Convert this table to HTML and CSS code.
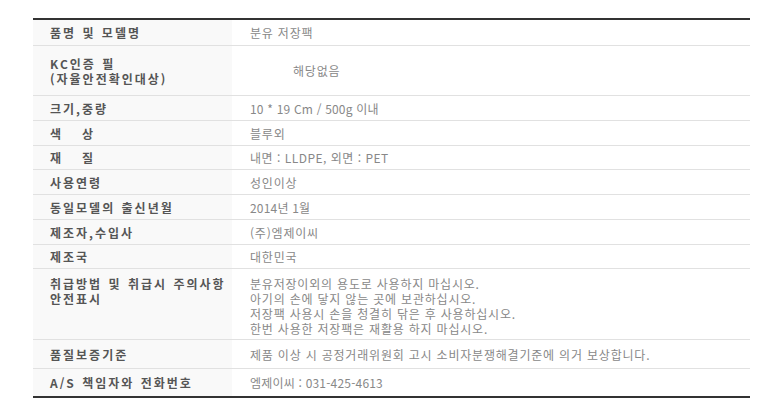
FILE: index.html
```html
<!DOCTYPE html>
<html lang="ko">
<head>
<meta charset="utf-8">
<link rel="stylesheet" href="styles.css">
</head>
<body>
<table class="spec">
  <tbody>
    <tr class="r1"><th>품명 및 모델명</th><td>분유 저장팩</td></tr>
    <tr class="r2"><th>KC인증 필<br>(자율안전확인대상)</th><td><span class="indent">해당없음</span></td></tr>
    <tr class="r3"><th>크기,중량</th><td class="latin">10 * 19 Cm / 500g 이내</td></tr>
    <tr class="r3"><th>색&nbsp;&nbsp;&nbsp;상</th><td>블루외</td></tr>
    <tr class="r5"><th>재&nbsp;&nbsp;&nbsp;질</th><td class="latin mid">내면 : LLDPE, 외면 : PET</td></tr>
    <tr class="r3"><th>사용연령</th><td>성인이상</td></tr>
    <tr class="r3"><th>동일모델의 출신년월</th><td class="latin">2014년 1월</td></tr>
    <tr class="r3"><th>제조자,수입사</th><td>(주)엠제이씨</td></tr>
    <tr class="r5"><th>제조국</th><td>대한민국</td></tr>
    <tr class="r10 top"><th>취급방법 및 취급시 주의사항<br>안전표시</th><td>분유저장이외의 용도로 사용하지 마십시오.<br>아기의 손에 닿지 않는 곳에 보관하십시오.<br>저장팩 사용시 손을 청결히 닦은 후 사용하십시오.<br>한번 사용한 저장팩은 재활용 하지 마십시오.</td></tr>
    <tr class="r11"><th>품질보증기준</th><td>제품 이상 시 공정거래위원회 고시 소비자분쟁해결기준에 의거 보상합니다.</td></tr>
    <tr class="r12 last"><th>A/S 책임자와 전화번호</th><td class="latin">엠제이씨 : 031-425-4613</td></tr>
  </tbody>
</table>
</body>
</html>
```

FILE: styles.css
```css
html, body {
  margin: 0;
  padding: 0;
  background: #fff;
}
body {
  font-family: "Noto Sans CJK KR", "Noto Sans", sans-serif;
  font-size: 12px;
}
.spec {
  border-collapse: collapse;
  width: 717px;
  margin: 18px 0 0 33px;
  border-top: 2px solid #333;
  border-bottom: 2px solid #333;
}
.spec th, .spec td {
  border-bottom: 1px solid #e1e1e1;
  padding: 0;
  vertical-align: middle;
  text-align: left;
  line-height: 15px;
}
.spec th {
  width: 182px;
  padding-left: 17px;
  background: #f9f9f9;
  color: #555;
  font-weight: bold;
  letter-spacing: 2px;
  word-spacing: 1px;
}
.spec td {
  padding-left: 18px;
  color: #888;
  letter-spacing: 0.8px;
}
.spec td.latin {
  letter-spacing: 0.2px;
}
.spec td.mid {
  letter-spacing: 0.5px;
}
.spec .indent {
  padding-left: 43px;
}
.r1 th, .r1 td { height: 25px; }
.r2 th, .r2 td { height: 49px; }
.r3 th, .r3 td { height: 24px; }
.r5 th, .r5 td { height: 23px; }
.r10 th, .r10 td { height: 70px; }
.r11 th, .r11 td { height: 28px; }
.r12 th, .r12 td { height: 27px; }
.top th, .top td {
  vertical-align: top;
  padding-top: 7px;
  height: 63px;
}
.last th, .last td { border-bottom: none; }
```
